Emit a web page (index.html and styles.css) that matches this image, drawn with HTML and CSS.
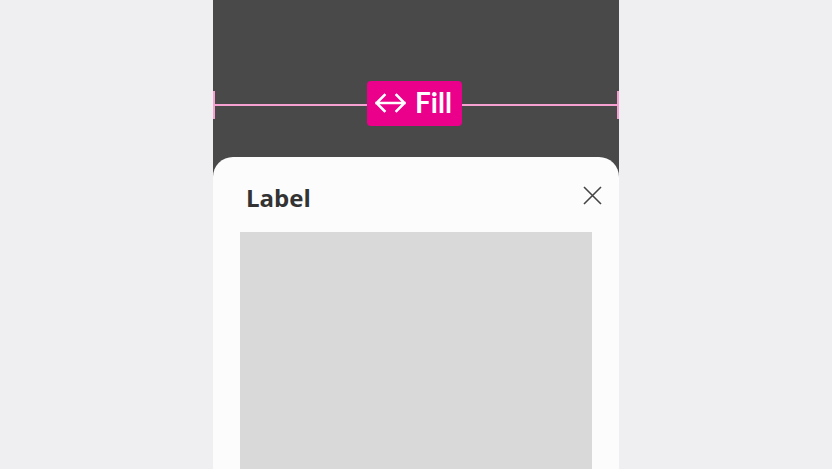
FILE: index.html
```html
<!DOCTYPE html>
<html>
<head>
<meta charset="utf-8">
<link rel="stylesheet" href="styles.css">
</head>
<body>
<div class="stage">
  <div class="top">
    <div class="measure">
      <div class="cap"></div>
      <div class="line line-left"></div>
      <div class="badge">
        <svg class="arrow" width="31" height="20" viewBox="0 0 31 20"><path d="M1.5 10H29.5M9.5 2L1.5 10L9.5 18M21.5 2L29.5 10L21.5 18" fill="none" stroke="#fff" stroke-width="2.5" stroke-linecap="square"/></svg>
        <span class="fill-text">Fill</span>
      </div>
      <div class="line"></div>
      <div class="cap"></div>
    </div>
  </div>
  <div class="card">
    <div class="card-head">
      <span class="label">Label</span>
      <svg class="close" width="19" height="19" viewBox="0 0 19 19"><path d="M1 1L18 18M18 1L1 18" stroke="#444" stroke-width="1.6" fill="none"/></svg>
    </div>
    <div class="content"></div>
  </div>
</div>
</body>
</html>
```
FILE: styles.css
```css
html, body {
  margin: 0;
  padding: 0;
  background: #efeff1;
  height: 469px;
  overflow: hidden;
}
.stage {
  width: 406px;
  height: 469px;
  margin: 0 auto;
  background: #494949;
  display: flex;
  flex-direction: column;
}
.top {
  height: 157px;
  padding-top: 81px;
  box-sizing: border-box;
}
.measure {
  display: flex;
  align-items: center;
  height: 48px;
}
.cap {
  width: 2px;
  height: 28px;
  background: #f7a1d2;
}
.line {
  flex: 1;
  height: 2px;
  background: #f7a1d2;
}
.line-left {
  flex: 0 0 152px;
}
.badge {
  align-self: flex-start;
  width: 95px;
  height: 45px;
  box-sizing: border-box;
  background: #eb008b;
  border-radius: 4px;
  display: flex;
  align-items: center;
  padding-left: 8px;
  gap: 9px;
}
.arrow {
  display: block;
  margin-top: -2px;
}
.fill-text {
  font-family: Lato, "Open Sans", sans-serif;
  font-weight: 700;
  font-size: 28px;
  color: #fff;
  line-height: 1;
  margin-top: -4px;
}
.card {
  flex: 1;
  background: #fcfcfc;
  border-radius: 20px 20px 0 0;
  padding: 0 27px;
  display: flex;
  flex-direction: column;
}
.card-head {
  height: 75px;
  display: flex;
  align-items: center;
  justify-content: space-between;
  padding-left: 6px;
  padding-top: 5px;
  box-sizing: border-box;
}
.label {
  font-family: "Open Sans", Lato, sans-serif;
  font-weight: 700;
  font-size: 24px;
  color: #333;
}
.close {
  display: block;
  margin-top: -3px;
  margin-right: -10px;
}
.content {
  flex: 1;
  background: #d9d9d9;
}
```
